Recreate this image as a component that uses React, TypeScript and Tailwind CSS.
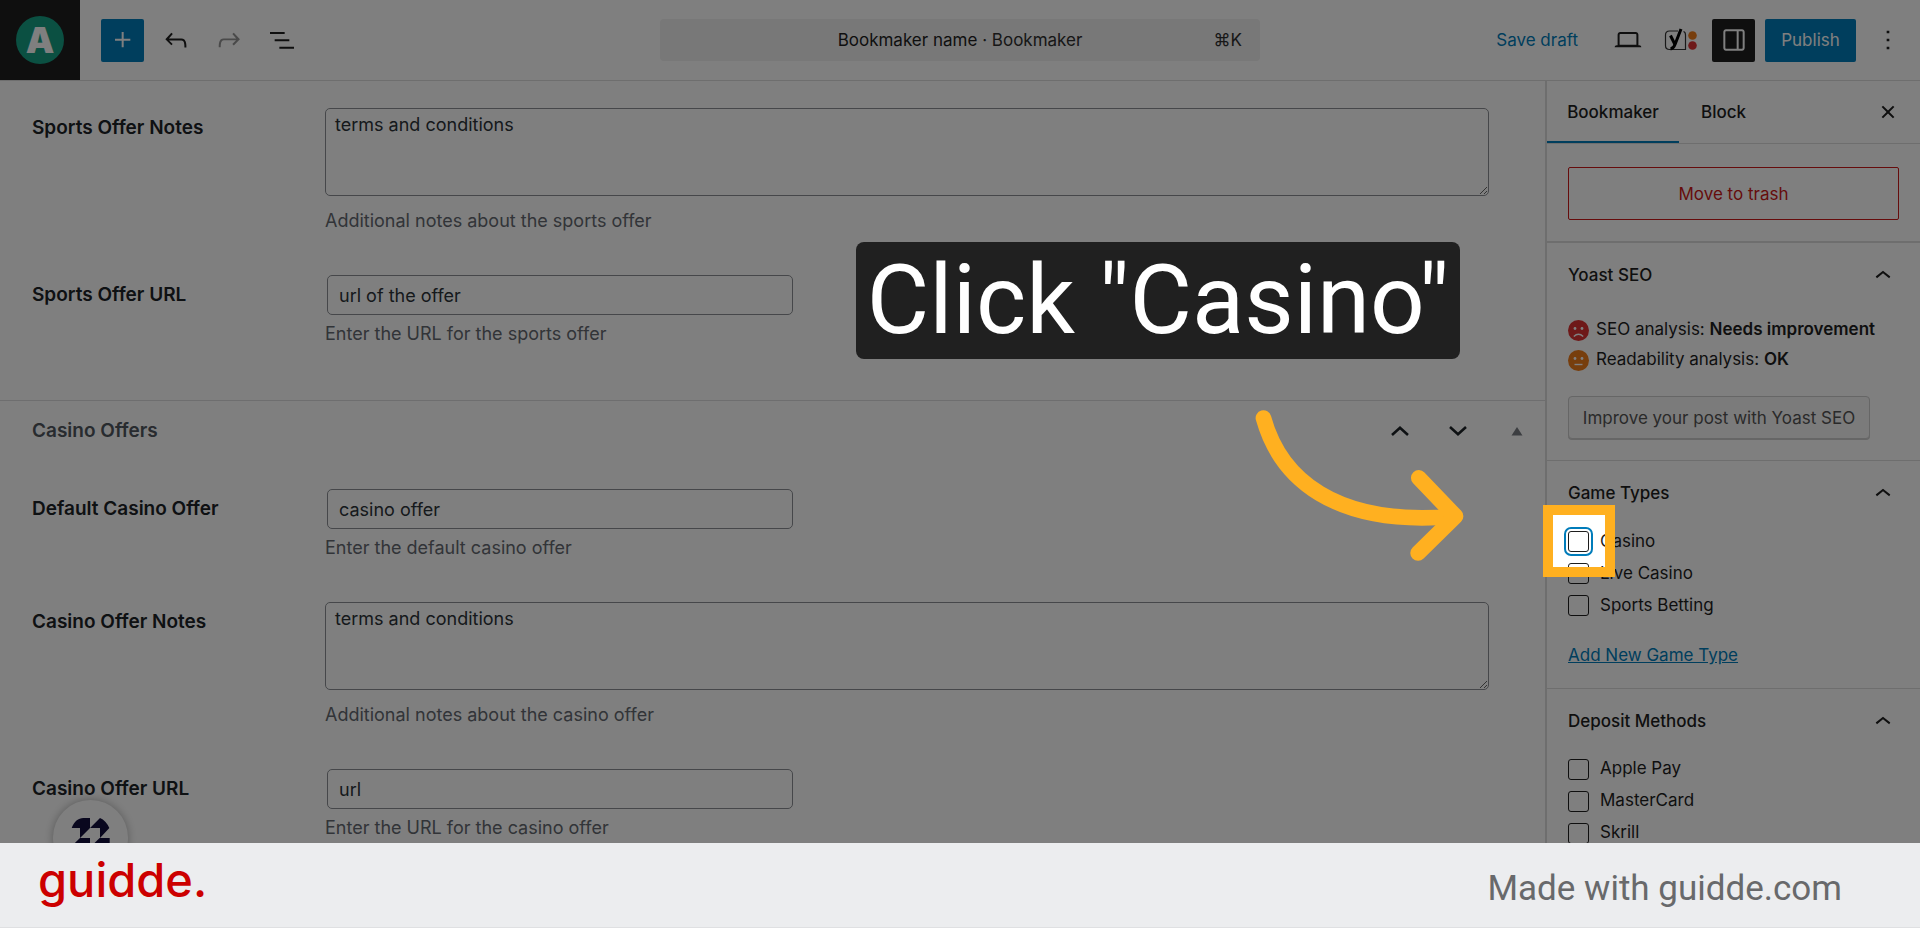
import type { ReactNode } from 'react';
import clsx from 'clsx';

const icons = {
    plus: 'M11 12.5V17.5H12.5V12.5H17.5V11H12.5V6H11V11H6V12.5H11Z',
    undo: 'M18.3 11.7c-.6-.6-1.4-.9-2.3-.9H6.7l2.9-3.3-1.1-1-4.5 5L8.5 16l1-1-2.7-2.7H16c.5 0 .9.2 1.3.5 1 1 1 3.4 1 4.5v.3h1.5v-.2c0-1.5 0-4.3-1.5-5.7z',
    redo: 'M15.6 6.5l-1.1 1 2.9 3.3H8c-.9 0-1.7.3-2.3.9-1.4 1.5-1.4 4.2-1.4 5.6v.2h1.5v-.3c0-1.1 0-3.5 1-4.5.3-.3.7-.5 1.3-.5h9.2L14.5 15l1.1 1.1 4.6-4.6-4.6-5z',
    listView: 'M3 6h11v1.5H3V6Zm3.5 5.5h11V13h-11v-1.5ZM21 17H10v1.5h11V17Z',
    desktop:
        'M20.5 16h-.7V8c0-1.1-.9-2-2-2H6.2c-1.1 0-2 .9-2 2v8h-.7c-.8 0-1.5.7-1.5 1.5h20c0-.8-.7-1.5-1.5-1.5zM5.7 8c0-.3.2-.5.5-.5h11.6c.3 0 .5.2.5.5v7.6H5.7V8z',
    drawer: 'M18 4H6c-1.1 0-2 .9-2 2v12c0 1.1.9 2 2 2h12c1.1 0 2-.9 2-2V6c0-1.1-.9-2-2-2zm-4 14.5H6c-.3 0-.5-.2-.5-.5V6c0-.3.2-.5.5-.5h8v13zm4.5-.5c0 .3-.2.5-.5.5h-2.5v-13H18c.3 0 .5.2.5.5v12z',
    more: 'M13 19h-2v-2h2v2zm0-6h-2v-2h2v2zm0-6h-2V5h2v2z',
    chevronUp: 'M6.5 12.4L12 8l5.5 4.4-.9 1.2L12 10l-4.5 3.6-1-1.2z',
    close: 'M12 13.06l3.712 3.713 1.061-1.06L13.061 12l3.712-3.712-1.06-1.06L12 10.938 8.288 7.227l-1.061 1.06L10.939 12l-3.712 3.712 1.06 1.061L12 13.061z',
};

function Icon({ name }: { name: keyof typeof icons }) {
    return (
        <svg viewBox="0 0 24 24" className="w-8 h-8 fill-current" aria-hidden="true">
            <path d={icons[name]} />
        </svg>
    );
}

function ToolButton({
    label,
    className,
    children,
}: {
    label: string;
    className?: string;
    children: ReactNode;
}) {
    return (
        <button
            type="button"
            aria-label={label}
            className={clsx('w-[43px] h-[43px] shrink-0 rounded-xs flex items-center justify-center', className)}
        >
            {children}
        </button>
    );
}

function YoastIcon() {
    return (
        <svg viewBox="0 0 34 24" className="w-[34px] h-6 shrink-0" aria-hidden="true">
            <path
                d="M14 3H5.500Q1.500 3 1.500 7V17.500Q1.500 21.500 5.500 21.500H21.500V7Q21.500 4 19.500 3.500"
                fill="none"
                stroke="#333"
                strokeWidth="1.200"
            />
            <path d="M6.500 7.500L11 16.500" fill="none" stroke="#000" strokeWidth="3" />
            <path d="M17 1L11 16.500Q9.500 20.500 6.500 21" fill="none" stroke="#000" strokeWidth="3" />
            <circle cx="28.500" cy="7.500" r="4.300" fill="#ee7c1b" />
            <circle cx="28.500" cy="17.500" r="4.300" fill="#dc3232" />
        </svg>
    );
}

function Header() {
    return (
        <header className="h-[81px] shrink-0 grid grid-cols-[1fr_600px_1fr] items-center border-b border-[#ddd]">
            <div className="flex items-center h-20">
                <a
                    href="#home"
                    aria-label="View posts"
                    className="w-20 h-20 shrink-0 bg-[#1e1e1e] flex items-center justify-center"
                >
                    <span className="w-12 h-12 rounded-full bg-[#16a085] text-white text-4xl font-black flex items-center justify-center">
                        A
                    </span>
                </a>
                <div className="flex items-center gap-2.5 ml-[21px] text-[#1e1e1e]">
                    <ToolButton label="Toggle block inserter" className="bg-[#007cba] text-white">
                        <Icon name="plus" />
                    </ToolButton>
                    <ToolButton label="Undo">
                        <Icon name="undo" />
                    </ToolButton>
                    <ToolButton label="Redo" className="text-[#949494]">
                        <Icon name="redo" />
                    </ToolButton>
                    <ToolButton label="Document overview">
                        <Icon name="listView" />
                    </ToolButton>
                </div>
            </div>

            <button
                type="button"
                className="grid grid-cols-[1fr_auto_1fr] items-center h-[42px] px-[18px] pt-0.5 rounded bg-[#f0f0f0] text-[#1e1e1e]"
            >
                <span />
                <span>
                    Bookmaker name <span className="text-[#2f2f2f]">· Bookmaker</span>
                </span>
                <span className="text-right text-[#2f2f2f]">⌘K</span>
            </button>

            <div className="flex items-center justify-end gap-2.5 pr-[11px] text-[#1e1e1e]">
                <button type="button" className="px-[18px] pt-0.5 h-[43px] text-[#007cba]">
                    Save draft
                </button>
                <ToolButton label="Preview">
                    <Icon name="desktop" />
                </ToolButton>
                <ToolButton label="Yoast SEO">
                    <YoastIcon />
                </ToolButton>
                <ToolButton label="Settings" className="bg-[#1e1e1e] text-white">
                    <Icon name="drawer" />
                </ToolButton>
                <button type="button" className="w-[91px] h-[43px] pt-0.5 rounded-xs bg-[#007cba] text-white">
                    Publish
                </button>
                <ToolButton label="Options">
                    <Icon name="more" />
                </ToolButton>
            </div>
        </header>
    );
}

type FieldProps = {
    id: string;
    label: string;
    value: string;
    help: string;
    multiline?: boolean;
};

function Field({ id, label, value, help, multiline }: FieldProps) {
    return (
        <div className="flex pl-8 pr-14">
            <label htmlFor={id} className="w-[293px] shrink-0 text-[19px] leading-10 font-semibold text-[#1d2327]">
                {label}
            </label>
            <div className="flex-1">
                {multiline ? (
                    <textarea
                        id={id}
                        defaultValue={value}
                        className="block w-full h-[88px] px-[9px] py-1 leading-6 rounded-[5px] border border-[#8c8f94] text-[#2c3338]"
                    />
                ) : (
                    <input
                        id={id}
                        type="text"
                        defaultValue={value}
                        className="block w-[466px] h-10 ml-0.5 px-[11px] rounded-[5px] border border-[#8c8f94] text-[#2c3338]"
                    />
                )}
                <p className={clsx('leading-6 text-[#646970]', multiline ? 'mt-[13px]' : 'mt-[7px]')}>{help}</p>
            </div>
        </div>
    );
}

function MetaBoxes() {
    return (
        <main className="flex-1 min-w-0 text-lg">
            <section className="flex flex-col gap-[42px] pt-[27px] pb-[54px]">
                <Field
                    id="sports-notes"
                    label="Sports Offer Notes"
                    value="terms and conditions"
                    help="Additional notes about the sports offer"
                    multiline
                />
                <Field
                    id="sports-url"
                    label="Sports Offer URL"
                    value="url of the offer"
                    help="Enter the URL for the sports offer"
                />
            </section>

            <section className="border-t border-[#dcdcde]">
                <div className="flex items-center h-[60px] pl-8 pr-2.5 mb-7">
                    <h2 className="flex-1 text-[19px] font-semibold text-[#50575e]">Casino Offers</h2>
                    <div className="flex items-center text-[#1d2327]">
                        <button type="button" aria-label="Move up" className="w-[58px] h-10 flex items-center justify-center">
                            <svg viewBox="0 0 18 10" className="w-[18px] h-2.5" aria-hidden="true">
                                <path d="M1 9L9 1.800L17 9" fill="none" stroke="currentColor" strokeWidth="2.600" />
                            </svg>
                        </button>
                        <button type="button" aria-label="Move down" className="w-[58px] h-10 flex items-center justify-center">
                            <svg viewBox="0 0 18 10" className="w-[18px] h-2.5" aria-hidden="true">
                                <path d="M1 1L9 8.200L17 1" fill="none" stroke="currentColor" strokeWidth="2.600" />
                            </svg>
                        </button>
                        <button
                            type="button"
                            aria-label="Toggle panel"
                            className="w-9 h-10 ml-3 flex items-center justify-center text-[#787c82]"
                        >
                            <svg viewBox="0 0 12 9" className="w-3 h-[9px] fill-current" aria-hidden="true">
                                <path d="M6 0L11.500 8.500H.5Z" />
                            </svg>
                        </button>
                    </div>
                </div>
                <div className="flex flex-col gap-[42px]">
                    <Field
                        id="casino-offer"
                        label="Default Casino Offer"
                        value="casino offer"
                        help="Enter the default casino offer"
                    />
                    <Field
                        id="casino-notes"
                        label="Casino Offer Notes"
                        value="terms and conditions"
                        help="Additional notes about the casino offer"
                        multiline
                    />
                    <Field
                        id="casino-url"
                        label="Casino Offer URL"
                        value="url"
                        help="Enter the URL for the casino offer"
                    />
                </div>
            </section>
        </main>
    );
}

function Panel({ title, className, children }: { title: string; className?: string; children: ReactNode }) {
    return (
        <section className={clsx('px-[21px] border-b border-[#ddd]', className)}>
            <h2>
                <button type="button" className="w-full h-[66px] flex items-center justify-between font-medium">
                    {title}
                    <Icon name="chevronUp" />
                </button>
            </h2>
            {children}
        </section>
    );
}

function Term({ label, focused }: { label: string; focused?: boolean }) {
    return (
        <div className="relative h-8">
            <label className="flex items-center gap-[11px] h-[21px]">
                <input
                    type="checkbox"
                    className={clsx(
                        'appearance-none w-[21px] h-[21px] rounded-[3px] border border-[#1e1e1e] bg-white',
                        focused && 'outline-2 outline-offset-2 outline-[#007cba]',
                    )}
                />
                {label}
            </label>
            {focused && <Spotlight />}
        </div>
    );
}

// The spread shadow is what dims everything around the highlighted control
function Spotlight() {
    return (
        <div className="absolute -left-[25px] -top-[26px] z-20 w-[72px] h-[72px] border-10 border-[#ffb020] shadow-[0_0_0_4000px_rgba(0,0,0,0.5)] pointer-events-none" />
    );
}

function Face({ mood }: { mood: 'bad' | 'ok' }) {
    return (
        <svg viewBox="0 0 21 21" className="w-[21px] h-[21px] shrink-0" aria-hidden="true">
            <circle cx="10.500" cy="10.500" r="10.500" fill={mood === 'bad' ? '#dc3232' : '#ee7c1b'} />
            <circle cx="7" cy="8.500" r="1.400" fill="#fff" />
            <circle cx="14" cy="8.500" r="1.400" fill="#fff" />
            <path
                d={mood === 'bad' ? 'M5.800 16.500Q10.500 12 15.200 16.500' : 'M6.500 14.500H14.500'}
                fill="none"
                stroke="#fff"
                strokeWidth="1.400"
            />
        </svg>
    );
}

function Sidebar() {
    return (
        <aside className="w-[375px] shrink-0 border-l-2 border-[#ddd] text-[#1e1e1e]">
            <div className="flex items-stretch h-[63px] border-b border-[#ddd] pr-4">
                <button type="button" className="w-[132px] pt-1 border-b-2 border-[#007cba] font-medium">
                    Bookmaker
                </button>
                <button type="button" className="px-[22px] pt-0.5 font-medium">
                    Block
                </button>
                <button type="button" aria-label="Close settings" className="ml-auto">
                    <Icon name="close" />
                </button>
            </div>

            <div className="px-[21px] pt-[23px] pb-[21px] border-b-2 border-[#ddd]">
                <button type="button" className="w-full h-[53px] pt-0.5 rounded-xs border border-[#cc1818] text-[#cc1818]">
                    Move to trash
                </button>
            </div>

            <Panel title="Yoast SEO" className="pb-[21px]">
                <ul className="pt-1.5">
                    <li className="flex items-center gap-[7px] h-[30px]">
                        <Face mood="bad" />
                        <span>
                            SEO analysis: <strong className="font-semibold">Needs improvement</strong>
                        </span>
                    </li>
                    <li className="flex items-center gap-[7px] h-[30px]">
                        <Face mood="ok" />
                        <span>
                            Readability analysis: <strong className="font-semibold">OK</strong>
                        </span>
                    </li>
                </ul>
                <button
                    type="button"
                    className="mt-[21px] w-[302px] h-[43px] pt-0.5 rounded border border-[#ccc] bg-[#f7f7f7] text-[#555] shadow-[0_1px_0_#ccc]"
                >
                    Improve your post with Yoast SEO
                </button>
            </Panel>

            <Panel title="Game Types" className="pb-[19px]">
                <div className="pt-1">
                    <Term label="Casino" focused />
                    <Term label="Live Casino" />
                    <Term label="Sports Betting" />
                </div>
                <a href="#add-game-type" className="inline-block mt-4 leading-6 text-[#007cba] underline">
                    Add New Game Type
                </a>
            </Panel>

            <Panel title="Deposit Methods">
                <div className="pt-1">
                    <Term label="Apple Pay" />
                    <Term label="MasterCard" />
                    <Term label="Skrill" />
                </div>
            </Panel>
        </aside>
    );
}

function ChatBubble() {
    return (
        <button
            type="button"
            aria-label="Open assistant"
            className="absolute left-[53px] top-[800px] z-10 w-[75px] h-[75px] rounded-full bg-white shadow-[0_0_10px_rgba(0,0,0,0.3)]"
        >
            <svg viewBox="159 120 225 225" className="w-full h-full fill-[#120e3c]" aria-hidden="true">
                <path d="M215 204C222 185 235 174 250 174H270V204L240 234V204Z" />
                <path d="M270 204L300 174Q318 182 328 204L300 234V204Z" />
                <path d="M240 234H270V262H211Z" />
                <path d="M299 234H329V262H270Z" />
            </svg>
        </button>
    );
}

export default function App() {
    return (
        <div className="h-screen flex flex-col overflow-hidden bg-white font-['Inter','DejaVu_Sans',sans-serif] text-[17px]">
            <div className="relative flex-1 min-h-0 flex flex-col overflow-hidden">
                <Header />
                <div className="flex flex-1 min-h-0">
                    <MetaBoxes />
                    <Sidebar />
                </div>
                <ChatBubble />

                {/* Step callout */}
                <div className="absolute right-[460px] top-[242px] z-30 w-[604px] h-[117px] rounded-lg bg-[#202020] text-white text-center text-[96px] leading-[117px] whitespace-nowrap font-['Roboto',sans-serif]">
                    Click "Casino"
                </div>
                <svg
                    viewBox="100 50 640 470"
                    className="absolute right-[453px] top-[407px] z-30 w-[214px] h-[157px]"
                    fill="none"
                    stroke="#ffb020"
                    strokeWidth="47"
                    strokeLinecap="round"
                    strokeLinejoin="round"
                    aria-hidden="true"
                >
                    <path d="M131 83C180 260 340 410 704 377" />
                    <path d="M596 262L706 377L594 487" />
                </svg>
            </div>

            <footer className="relative z-30 h-[85px] shrink-0 flex items-center justify-between pl-[38px] pr-[78px] bg-[#ecedef] border-b border-[#dfe0e2]">
                <span className="pb-2.5 text-[47px] leading-[60px] font-medium text-[#cc0000]">guidde.</span>
                <span className="pt-2 text-[35px] leading-10 text-[#68696b] font-['Roboto',sans-serif]">
                    Made with guidde.com
                </span>
            </footer>
        </div>
    );
}
